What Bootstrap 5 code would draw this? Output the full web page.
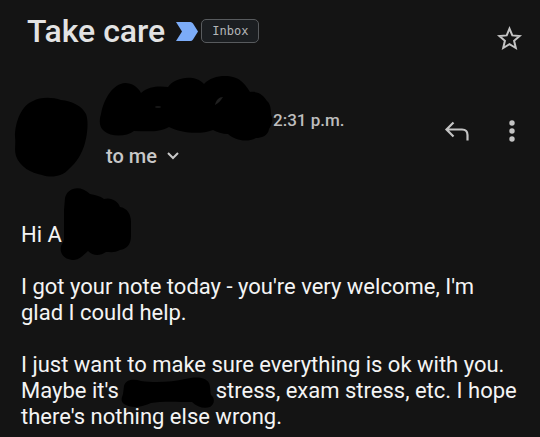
<!DOCTYPE html>
<html lang="en" data-bs-theme="dark">
<head>
<meta charset="utf-8">
<meta name="viewport" content="width=device-width, initial-scale=1">
<title>Take care</title>
<link rel="stylesheet" href="https://cdn.jsdelivr.net/npm/bootstrap@5.3.0/dist/css/bootstrap.min.css">
<style>
  body { background: #141414; color: #f4f4f4; font-family: Roboto, "Liberation Sans", sans-serif; }
  svg { display: block; overflow: visible; }
  .subject-bar { padding: 16px 18px 0 27px; }
  .subject { font-size: 32px; line-height: 30px; font-weight: 500; color: #e3e3e3; margin-right: 11px; }
  .inbox-label { font: 12px/22px "DejaVu Sans Mono", "Liberation Mono", monospace; color: #b4b6b8; background: #1b1e21; border: 1px solid #585b5e; border-radius: 5px; padding: 0 10px; margin-left: 3px; }
  .icon-btn { color: #c4c4c4; line-height: 1; }
  .star-btn { margin-top: 10px; }
  .message-head { padding: 25px 24px 0 15px; }
  .avatar { margin: 22px 12px 0 0; }
  .sender { gap: 1px; }
  .time { font-size: 17px; line-height: 24px; font-weight: 500; color: #bdbdbd; margin-top: 32px; }
  .recipient { font-size: 20px; line-height: 24px; font-weight: 500; color: #c8c8c8; gap: 10px; margin: 2px 0 0 6px; }
  .actions { gap: 39px; margin-top: 44px; }
  .message-body { font-size: 22px; line-height: 26px; padding: 44px 20px 6px 21px; }
  .message-body p { margin-bottom: 26px; }
  .message-body p:last-child { margin-bottom: 0; }
  .hidden-word { position: relative; display: inline-block; width: 86px; height: 16px; }
  .hidden-name { width: 68px; }
  .hidden-word svg { position: absolute; left: -3px; top: -4px; }
  .hidden-name svg { left: -1px; top: -39px; }
</style>
</head>
<body>
<header class="subject-bar d-flex align-items-start justify-content-between">
  <div class="d-flex align-items-center">
    <h1 class="subject mb-0">Take care</h1>
    <svg width="22" height="19" viewBox="0 0 22 19" aria-hidden="true"><path d="M0 0H14.500Q16 0 17 1.500L22 9.500L17 17.500Q16 19 14.500 19H0L6 9.500Z" fill="#7cacf8"/></svg>
    <span class="inbox-label">Inbox</span>
  </div>
  <button type="button" class="btn p-0 border-0 icon-btn star-btn" aria-label="Star">
    <svg width="25" height="25" viewBox="0 0 25 25" fill="none" stroke="currentColor" stroke-width="2"><path d="M12.500 2.600L15.300 9.400L22.600 10L17.100 14.800L18.800 22L12.500 18.200L6.200 22L7.900 14.800L2.400 10L9.700 9.400Z"/></svg>
  </button>
</header>

<section class="message-head d-flex align-items-start">
  <svg class="avatar flex-shrink-0" width="73" height="80" viewBox="15 98 73 80" aria-hidden="true"><path d="M33 101C40 97 52 97 61 100C72 101 82 106 86 114C89 122 87 136 85 143C82 154 76 163 69 169C62 177 51 178 42 175C31 173 20 167 16 156C14 150 16 144 15 137C15 121 22 105 33 101Z" fill="#000"/></svg>
  <div>
    <div class="sender d-flex align-items-start">
      <svg width="172" height="66" viewBox="100 76 172 66" aria-hidden="true"><path d="M101 114C104 98 113 84 125 83C132 83 138 87 141 93C149 86 159 86 168 87C175 77 195 74 204 84C213 74 233 74 241 81C246 85 248 89 250 92C259 91 264 96 267 101C271 104 271 111 271 115C274 120 271 126 269 129C268 136 261 138 256 138C246 143 235 140 228 134C222 134 217 132 213 130C200 135 181 133 169 127C158 133 146 131 134 131C126 137 111 137 104 131C99 127 99 120 101 114Z" fill="#000"/><path d="M215 105C216 100 219 97 223 97C221 100 219 103 215 105Z" fill="#202020"/><ellipse cx="158" cy="107" rx="3" ry="1" fill="#181818"/></svg>
      <time class="time">2:31 p.m.</time>
    </div>
    <button type="button" class="btn p-0 border-0 d-flex align-items-center recipient">to me
      <svg width="12" height="8" viewBox="0 0 12 8" fill="none" stroke="currentColor" stroke-width="2" aria-hidden="true"><path d="M1 1L6 6L11 1"/></svg>
    </button>
  </div>
  <div class="actions d-flex align-items-center ms-auto">
    <button type="button" class="btn p-0 border-0 icon-btn" aria-label="Reply">
      <svg width="24" height="20" viewBox="0 0 24 20" fill="none" stroke="currentColor" stroke-width="2.200"><path d="M8.500 1.500L1.500 8.500L8.500 15.500M1.500 8.500H17Q22.500 8.500 22.500 14V19.500"/></svg>
    </button>
    <button type="button" class="btn p-0 border-0 icon-btn" aria-label="More options">
      <svg width="8" height="22" viewBox="0 0 8 22" fill="currentColor"><circle cx="4" cy="3" r="2.700"/><circle cx="4" cy="11" r="2.700"/><circle cx="4" cy="19" r="2.700"/></svg>
    </button>
  </div>
</section>

<main class="message-body">
  <p>Hi A<span class="hidden-word hidden-name"><svg width="71" height="73" viewBox="61 187 71 73" aria-hidden="true"><path d="M65 198C67 188 80 184 90 194C95 195 100 196 104 199C111 197 118 201 120 207C127 208 131 214 131 222V236C131 244 127 249 120 250C115 253 110 252 106 252C100 256 93 256 88 251C84 254 81 259 74 260C65 260 59 254 61 246L64 240V210Z" fill="#000"/></svg></span></p>
  <p>I got your note today - you're very welcome, I'm glad I could help.</p>
  <p>I just want to make sure everything is ok with you. Maybe it's <span class="hidden-word"><svg width="93" height="30" viewBox="121 377 93 30" aria-hidden="true"><path d="M124 385C126 378 134 378 141 380C155 382 173 381 185 378C194 376 205 375 209 382C211 387 210 392 211 394C215 397 215 403 210 406C204 408 197 406 192 401C178 401 161 400 151 402C143 406 131 408 124 403C120 400 122 396 123 393Z" fill="#000"/></svg></span> stress, exam stress, etc. I hope there's nothing else wrong.</p>
</main>
<script src="https://cdn.jsdelivr.net/npm/bootstrap@5.3.0/dist/js/bootstrap.bundle.min.js"></script>
</body>
</html>
